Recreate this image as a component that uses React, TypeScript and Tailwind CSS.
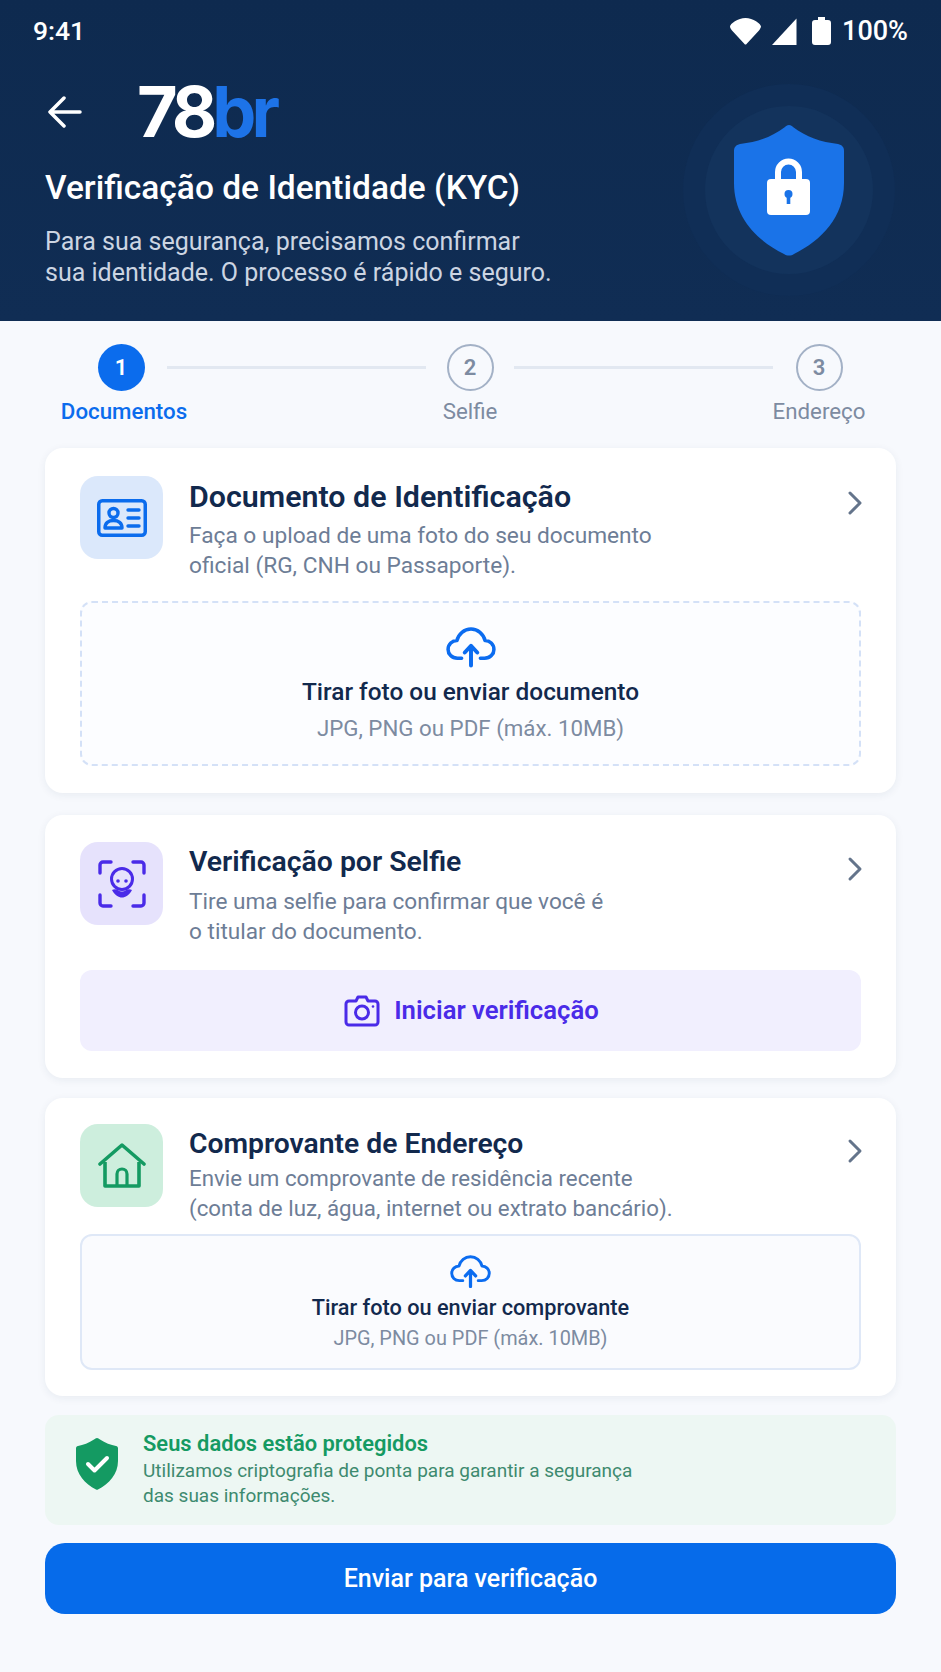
import React from "react";

const Chevron = () => (
  <svg width="18" height="26" viewBox="0 0 18 26" fill="none" className="shrink-0">
    <path d="M4 3l10 10L4 23" stroke="#64748b" strokeWidth="3" strokeLinecap="round" strokeLinejoin="round" />
  </svg>
);

const Cloud = ({ w = 48 }: { w?: number }) => (
  <svg width={w} height={w * 0.8125} viewBox="0 0 48 39" fill="none">
    <path d="M15 30H11C5.500 30 2 26 2 21.500 2 16.500 6 13 10.500 13 12 6.500 17.500 2 24 2s12 4.500 13.500 11C42 13 46 16.500 46 21.500 46 26 42.500 30 37 30h-4" stroke="#0b6cf0" strokeWidth="3.400" strokeLinecap="round" strokeLinejoin="round" />
    <path d="M24 37V19M18 24.500L24 18l6 6.500" stroke="#0b6cf0" strokeWidth="3.800" strokeLinecap="round" strokeLinejoin="round" />
  </svg>
);

const Step = ({ n, label, active, w }: { n: string; label: string; active?: boolean; w: string }) => (
  <div className={`flex flex-col items-center shrink-0 ${w}`}>
    <div className={active ? "w-[47px] h-[47px] rounded-full bg-[#0b6ced] text-white flex items-center justify-center text-[22px] font-semibold" : "w-[47px] h-[47px] rounded-full border-[2.500px] border-[#a3b1c6] text-[#7d8ba1] flex items-center justify-center text-[22px] font-semibold"}>{n}</div>
    <div className={active ? "mt-[5px] ml-[6px] text-[22.300px] leading-[30px] font-medium text-[#0b6ced] whitespace-nowrap" : "mt-[5px] text-[22.300px] leading-[30px] text-[#7d8ba1] whitespace-nowrap"}>{label}</div>
  </div>
);

const Card = ({ icon, iconBg, title, titleClass, lines, descClass, pt, children, h }: { icon: React.ReactNode; iconBg: string; title: string; titleClass: string; lines: string[]; descClass: string; pt: string; children: React.ReactNode; h: string }) => (
  <section className={`rounded-[18px] bg-white shadow-[0_2px_8px_rgba(30,50,90,0.07)] px-[35px] ${pt} ${h}`}>
    <div className="flex items-start">
      <div className={`w-[83px] h-[83px] rounded-[18px] shrink-0 flex items-center justify-center ${iconBg}`}>{icon}</div>
      <div className="ml-[26px] flex-1 min-w-0">
        <h2 className={`leading-[40px] font-semibold text-[#12294d] ${titleClass}`}>{title}</h2>
        <div className={`leading-[29.500px] text-[#6d7d96] ${descClass}`}>
          {lines.map((l) => <div key={l} className="whitespace-nowrap">{l}</div>)}
        </div>
      </div>
      <div className="mt-[14px] -mr-[3px]"><Chevron /></div>
    </div>
    {children}
  </section>
);

export default function App() {
  return (
    <div className="w-[941px] h-[1672px] bg-[#f7f9fd] font-['Roboto',sans-serif] overflow-hidden">
      <header className="relative h-[321px] bg-linear-to-b from-[#0e2a4f] to-[#102d54] text-white pl-[33px] pr-[33px] pt-[15px]">
        <div className="flex items-center justify-between h-[32px]">
          <span className="text-[26.500px] font-medium leading-[32px]">9:41</span>
          <div className="flex items-center">
            <svg width="33" height="27" viewBox="0 0 33 27"><path d="M1 8.500C1 6 9 0 16.500 0S32 6 32 8.500c0 1-1 2.500-2 4L17.500 26c-.5.800-1.500.800-2 0L3 12.500c-1-1.200-2-3-2-4Z" fill="white" /></svg>
            <svg width="26" height="27" viewBox="0 0 26 27" className="ml-[9px]"><path d="M25.500 0.500V27H1Z" fill="white" /></svg>
            <svg width="19" height="28" viewBox="0 0 19 28" className="ml-[15px]"><path d="M6 0h7v3h3a3 3 0 0 1 3 3v19a3 3 0 0 1-3 3H3a3 3 0 0 1-3-3V6a3 3 0 0 1 3-3h3Z" fill="white" /></svg>
            <span className="ml-[11px] text-[27px] font-medium leading-[32px]">100%</span>
          </div>
        </div>
        <div className="flex items-center ml-[15px] mt-[31px] h-[68px]">
          <svg width="34" height="32" viewBox="0 0 34 32" fill="none"><path d="M32 16H3M16 2L2 16l14 14" stroke="white" strokeWidth="3.500" strokeLinecap="round" strokeLinejoin="round" /></svg>
          <div className="ml-[55px] text-[70px] leading-[68px] font-bold font-['Inter',sans-serif] tracking-[-5px]">
            78<span className="text-[#1d73e8]">br</span>
          </div>
        </div>
        <h1 className="ml-[12px] mt-[21px] text-[33.500px] leading-[42px] font-medium whitespace-nowrap">Verificação de Identidade (KYC)</h1>
        <p className="ml-[12px] mt-[17px] text-[25px] leading-[31px] text-[#ccd5e2] whitespace-nowrap">
          Para sua segurança, precisamos confirmar<br />sua identidade. O processo é rápido e seguro.
        </p>
        <div className="absolute left-[683px] top-[84px] w-[212px] h-[212px] rounded-full bg-[#102e56] flex items-center justify-center">
          <div className="w-[168px] h-[168px] rounded-full bg-[#13335c] flex items-center justify-center">
            <svg width="112" height="132" viewBox="0 0 112 132">
              <path d="M56 1c-2 0-3 1-4 2C39 13 24 18 7 20c-4 1-6 3-6 7v32c0 34 22 57 50 71 3 2 7 2 10 0 28-14 50-37 50-71V27c0-4-2-6-6-7C88 18 73 13 60 3c-1-1-2-2-4-2Z" fill="#1a73e8" />
              <path d="M42 60V48a13.500 13.500 0 0 1 27 0v12h-6V48a7.500 7.500 0 0 0-15 0v12Z" fill="white" />
              <rect x="34" y="55" width="43" height="36" rx="4" fill="white" />
              <circle cx="55.500" cy="70" r="4" fill="#1a73e8" />
              <rect x="53.700" y="71" width="3.600" height="9" fill="#1a73e8" />
            </svg>
          </div>
        </div>
      </header>

      <main className="px-[45px]">
        <div className="flex items-start pt-[23px] h-[127px] pl-[15px]">
          <Step n="1" label="Documentos" active w="w-[122px]" />
          <div className="h-[3px] bg-[#e2e8f1] w-[259px] mt-[22px] -ml-[15px] shrink-0" />
          <Step n="2" label="Selfie" w="w-[88px]" />
          <div className="h-[3px] bg-[#e2e8f1] w-[259px] mt-[22px] shrink-0" />
          <Step n="3" label="Endereço" w="w-[92px]" />
        </div>

        <div className="flex flex-col">
          <Card
            h="h-[345px]"
            pt="pt-[28px]"
            titleClass="text-[30.400px] mt-[1px]"
            descClass="text-[22.700px] mt-[4px]"
            iconBg="bg-[#dbe8fb]"
            title="Documento de Identificação"
            lines={["Faça o upload de uma foto do seu documento", "oficial (RG, CNH ou Passaporte)."]}
            icon={
              <svg width="50" height="38" viewBox="0 0 50 38" fill="none">
                <rect x="1.750" y="1.750" width="46.500" height="34.500" rx="3.500" stroke="#0b6ced" strokeWidth="3.500" />
                <circle cx="16.500" cy="14" r="4.500" stroke="#0b6ced" strokeWidth="3.400" />
                <path d="M8 29c0-5 3.500-7.500 8.500-7.500S25 24 25 29Z" stroke="#0b6ced" strokeWidth="3.400" strokeLinejoin="round" />
                <path d="M31 11h11M31 19h11M31 27h11" stroke="#0b6ced" strokeWidth="3.400" strokeLinecap="round" />
              </svg>
            }
          >
            <div className="mt-[21px] h-[165px] rounded-[12px] border-2 border-dashed border-[#d4e1f7] bg-[#fcfdff] flex flex-col items-center pt-[24px]">
              <Cloud w={50} />
              <div className="mt-[8px] text-[24.400px] leading-[32px] font-medium text-[#12294d]">Tirar foto ou enviar documento</div>
              <div className="mt-[5px] text-[22.300px] leading-[30px] text-[#7d8ba1]">JPG, PNG ou PDF (máx. 10MB)</div>
            </div>
          </Card>

          <div className="mt-[22px]" />
          <Card
            h="h-[263px]"
            pt="pt-[27px]"
            titleClass="text-[28.400px]"
            descClass="text-[22.600px] mt-[5px]"
            iconBg="bg-[#e6e2fc]"
            title="Verificação por Selfie"
            lines={["Tire uma selfie para confirmar que você é", "o titular do documento."]}
            icon={
              <svg width="48" height="48" viewBox="0 0 48 48" fill="none">
                <path d="M2 13V5a3 3 0 0 1 3-3h8M35 2h8a3 3 0 0 1 3 3v8M46 35v8a3 3 0 0 1-3 3h-8M13 46H5a3 3 0 0 1-3-3v-8" stroke="#4a2be8" strokeWidth="3.400" strokeLinecap="round" />
                <circle cx="24" cy="19" r="10.500" stroke="#4a2be8" strokeWidth="3" />
                <circle cx="20" cy="21" r="1.800" fill="#4a2be8" />
                <circle cx="28" cy="21" r="1.800" fill="#4a2be8" />
                <path d="M14 30c3 5.500 6.500 7.500 10 7.500s7-2 10-7.500c-2-1-4.500-1-6.500 .5-1 .8-2.200 1-3.500 1s-2.500-.2-3.500-1c-2-1.500-4.500-1.500-6.500-.5Z" fill="#4a2be8" />
              </svg>
            }
          >
            <div className="mt-[24px] h-[81px] rounded-[12px] bg-[#f1effe] flex items-center justify-center">
              <svg width="36" height="32" viewBox="0 0 36 32" fill="none" className="ml-[2px]">
                <path d="M5 6h7l2-4h8l2 4h7a3 3 0 0 1 3 3v18a3 3 0 0 1-3 3H5a3 3 0 0 1-3-3V9a3 3 0 0 1 3-3Z" stroke="#4a2be8" strokeWidth="3" strokeLinejoin="round" />
                <circle cx="18" cy="17.500" r="6.500" stroke="#4a2be8" strokeWidth="3" />
                <circle cx="29" cy="11.500" r="1.300" fill="#4a2be8" />
              </svg>
              <span className="ml-[14px] text-[25.700px] font-semibold text-[#4a2be8]">Iniciar verificação</span>
            </div>
          </Card>

          <div className="mt-[20px]" />
          <Card
            h="h-[298px]"
            pt="pt-[26px]"
            titleClass="text-[28.300px]"
            descClass="text-[22.300px] mt-[0px] leading-[28.500px]"
            iconBg="bg-[#cdeedd]"
            title="Comprovante de Endereço"
            lines={["Envie um comprovante de residência recente", "(conta de luz, água, internet ou extrato bancário)."]}
            icon={
              <svg width="48" height="46" viewBox="0 0 48 46" fill="none">
                <path d="M2 21L24 2l22 19" stroke="#149a62" strokeWidth="3.600" strokeLinecap="round" strokeLinejoin="round" />
                <path d="M7 19v24h34V19" stroke="#149a62" strokeWidth="3.600" strokeLinejoin="round" />
                <path d="M19 43V31a5 5 0 0 1 10 0v12" stroke="#149a62" strokeWidth="3.200" />
              </svg>
            }
          >
            <div className="mt-[11px] h-[136px] rounded-[12px] border-2 border-[#dfe8f7] bg-[#fafbfe] flex flex-col items-center pt-[19px]">
              <Cloud w={41} />
              <div className="mt-[5px] text-[21.700px] leading-[30px] font-medium text-[#12294d]">Tirar foto ou enviar comprovante</div>
              <div className="mt-[2px] text-[19.900px] leading-[28px] text-[#7d8ba1]">JPG, PNG ou PDF (máx. 10MB)</div>
            </div>
          </Card>

          <div className="mt-[19px] h-[110px] rounded-[14px] bg-[#edf7f3] flex items-start pl-[31px] pt-[16px]">
            <svg width="42" height="52" viewBox="0 0 42 52" className="mt-[7px] shrink-0">
              <path d="M21 0c-1 0-2 .5-3 1.500C13 5 7 7 2 8c-1.200.2-2 1-2 2.200V23c0 13 9 23 20 28.500.7.300 1.300.300 2 0C33 46 42 36 42 23V10.200C42 9 41.200 8.200 40 8c-5-1-11-3-16-6.500C23 .5 22 0 21 0Z" fill="#149a62" />
              <path d="M12 26l6.500 6.500L31 20" stroke="white" strokeWidth="4" fill="none" strokeLinecap="round" strokeLinejoin="round" />
            </svg>
            <div className="ml-[25px]">
              <div className="text-[21.900px] leading-[26px] font-semibold text-[#159a62]">Seus dados estão protegidos</div>
              <div className="mt-[1px] text-[19px] leading-[25px] text-[#3d8a6f] whitespace-nowrap">Utilizamos criptografia de ponta para garantir a segurança<br />das suas informações.</div>
            </div>
          </div>

          <button className="mt-[18px] h-[71px] rounded-[20px] bg-[#066bea] text-white text-[25px] font-medium">Enviar para verificação</button>
        </div>
      </main>
    </div>
  );
}
